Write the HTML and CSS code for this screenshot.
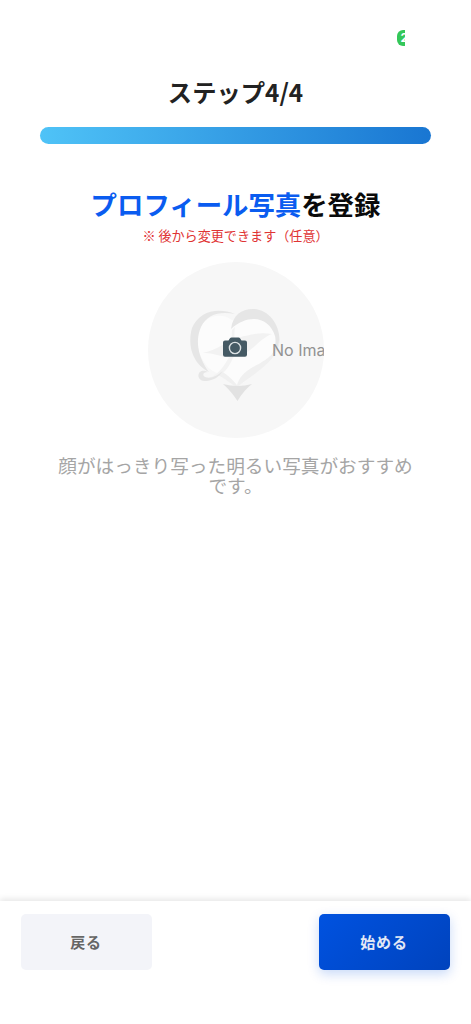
FILE: index.html
```html
<!DOCTYPE html>
<html lang="ja">
<head>
<meta charset="utf-8">
<meta name="viewport" content="width=device-width, initial-scale=1">
<title>ステップ4/4</title>
<link rel="stylesheet" href="styles.css">
</head>
<body>
<div class="screen">
  <div class="status"><div class="status-pill"><span>2</span></div></div>
  <header class="step">
    <h1 class="step-title">ステップ4/4</h1>
    <div class="progress"></div>
  </header>
  <main class="content">
    <h2 class="heading"><span class="accent">プロフィール写真</span>を登録</h2>
    <p class="note">※ 後から変更できます（任意）</p>
    <div class="photo">
      <svg class="heart" viewBox="0 0 110 110" aria-hidden="true">
        <path fill="#fcfcfc" d="M52 20C40 12 26 16 20 28C15 40 17 54 27 66C32 73 48 76 57 86C69 81 90 62 97 46C98 27 84 13 68 16C62 17 57 20 52 20Z"/>
        <path fill="#e6e6e6" d="M55 14C38 7 19 11 12 28C7 46 13 64 29 72C20 60 14 43 21 27C27 14 40 11 55 14Z"/>
        <path fill="#e6e6e6" d="M51 29C53 15 61 9 73 9C90 9 102 28 99 44C97 52 92 58 87 63C93 54 97 46 95 36C89 17 69 13 51 29Z"/>
        <path fill="#f3f3f3" d="M52 30C51 39 54 46 49 57C43 69 36 76 26 79C40 79 48 70 53 58C57 46 53 38 55 27Z"/>
        <path fill="#f2f2f2" d="M23 53C38 50 46 41 57 38C72 34 80 32 92 34C78 39 72 54 55 57C43 59 35 52 23 53Z"/>
        <path fill="#f0f0f0" d="M99 40C98 53 85 61 73 67C64 72 59 78 57 85C53 80 49 76 41 71L38 75C46 79 51 84 57 87C68 79 89 65 95 54C99 47 100 43 99 40Z"/>
        <path fill="#e6e6e6" d="M28 72C17 66 14 82 27 81C34 80 39 77 43 71C37 76 31 79 25 77C22 75 23 72 28 72Z"/>
        <path fill="#e2e2e2" d="M43 84Q58 88 72 84Q64 90 57.500 101Q51 91 43 84Z"/>
      </svg>
      <svg class="camera" viewBox="0 0 24 20" aria-hidden="true">
        <path fill="#455a64" d="M2 3.500H5.500L7 1.200Q7.500 .5 8.500 .5H15.500Q16.500 .5 17 1.200L18.500 3.500H22Q24 3.500 24 5.500V17.700Q24 19.700 22 19.700H2Q0 19.700 0 17.700V5.500Q0 3.500 2 3.500Z"/>
        <circle cx="12" cy="11" r="5.600" fill="#455a64" stroke="#dce2e4" stroke-width="1.400"/>
      </svg>
      <span class="no-image">No Image</span>
    </div>
    <p class="advice">顔がはっきり写った明るい写真がおすすめ<br>です。</p>
  </main>
  <footer class="actions">
    <button class="button back" type="button">戻る</button>
    <button class="button start" type="button">始める</button>
  </footer>
</div>
</body>
</html>
```
FILE: styles.css
```css
* { box-sizing: border-box; }
body { margin: 0; background: #fff; font-family: "Noto Sans CJK JP", sans-serif; }
.screen { height: 1024px; display: flex; flex-direction: column; overflow: hidden; }
.status { height: 74px; padding: 30px 66px 0 0; display: flex; justify-content: flex-end; }
.status-pill {
  width: 8px; height: 16px; overflow: hidden; border-radius: 6px 0 0 6px;
  background: #34c759; color: #fff; font: 700 12px/16px Inter, sans-serif;
}
.status-pill span { margin-left: 3.500px; }
.step { padding: 0 40px; text-align: center; }
.step-title { margin: 0; height: 53px; font-size: 24.300px; line-height: 36px; font-weight: 700; color: #222; }
.progress { height: 17px; border-radius: 9px; background: linear-gradient(90deg, #4fc3f7, #1976d2); }
.content { flex: 1; display: flex; flex-direction: column; align-items: center; padding-top: 41px; }
.heading { margin: 0; font-size: 26.400px; line-height: 38px; font-weight: 700; color: #0a0a0a; white-space: nowrap; }
.accent { color: #0a5cf0; }
.note { margin: 3px 0 0; font-size: 13.100px; line-height: 20px; color: #df3434; }
.photo {
  margin-top: 16px; width: 176px; height: 176px; flex: none; border-radius: 50%;
  background: #f7f7f7; position: relative; overflow: hidden;
}
.heart { position: absolute; left: 32px; top: 38px; width: 110px; height: 110px; }
.camera { position: absolute; left: 75.500px; top: 75px; width: 24px; height: 20px; }
.no-image { position: absolute; left: 124.500px; top: 78px; font: 400 16px/20px Inter, sans-serif; color: #929292; white-space: nowrap; }
.advice { margin: 17px 0 0; font-size: 18.670px; line-height: 20px; color: #a5a5a5; text-align: center; white-space: nowrap; }
.actions {
  height: 123px; padding: 13px 21px 0; display: flex; justify-content: space-between; align-items: flex-start;
  background: #fff; box-shadow: 0 -2px 6px rgba(0,0,0,.1);
}
.button {
  width: 131px; height: 56px; border: 0; border-radius: 5px; padding: 0 1px 0 0;
  font: 700 15px/24px "Noto Sans CJK JP", sans-serif; letter-spacing: .8px;
}
.back { background: #f3f4f9; color: #666; }
.start { background: linear-gradient(135deg, #0052e0, #0043bd); color: #e2e8f5; box-shadow: 0 4px 12px rgba(0,82,224,.22); }
```
